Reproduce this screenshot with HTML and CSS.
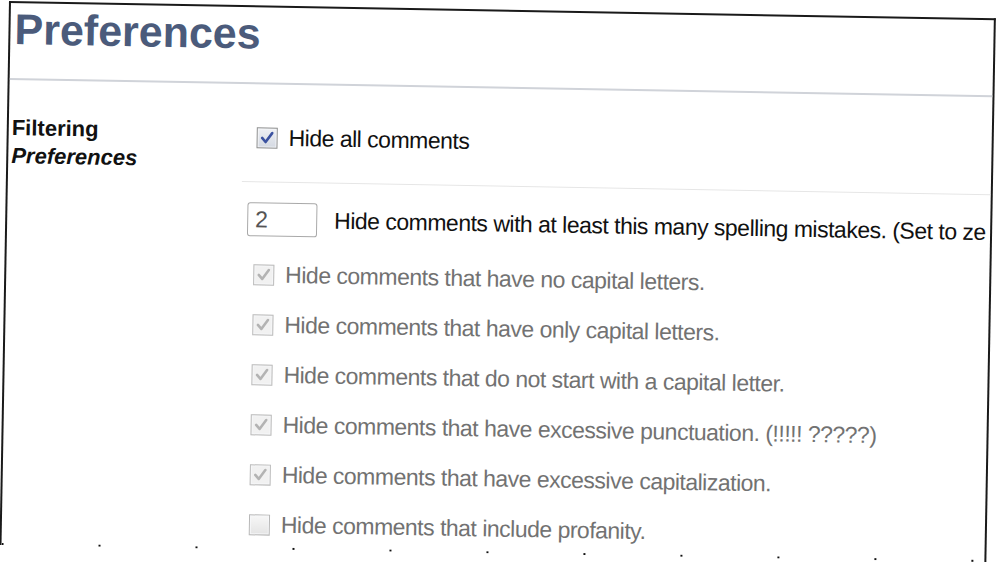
FILE: index.html
```html
<!DOCTYPE html>
<html lang="en">

<head>
  <meta charset="UTF-8">
  <meta name="viewport" content="width=device-width, initial-scale=1.0">
  <link rel="stylesheet" href="styles.css">
  <title>Preferences</title>
</head>

<body>

  <div class="frame">
    <h1 class="title">Preferences</h1>
    <div class="rule"></div>

    <div class="section">
      <div class="label">Filtering<br><em>Preferences</em></div>

      <div class="options">
        <label class="opt main">
          <span class="box on"><svg viewBox="0 0 19 19"><polyline points="4.5,9.5 8,13.5 14.5,4.5" /></svg></span>
          Hide all comments
        </label>

        <div class="sep"></div>

        <div class="opt spell">
          <input type="text" class="num" value="2">
          Hide comments with at least this many spelling mistakes. (Set to ze
        </div>

        <div class="checks">
          <label class="opt off">
            <span class="box dis"><svg viewBox="0 0 19 19"><polyline points="4.5,9.5 8,13.5 14.5,4.5" /></svg></span>
            Hide comments that have no capital letters.
          </label>
          <label class="opt off">
            <span class="box dis"><svg viewBox="0 0 19 19"><polyline points="4.5,9.5 8,13.5 14.5,4.5" /></svg></span>
            Hide comments that have only capital letters.
          </label>
          <label class="opt off">
            <span class="box dis"><svg viewBox="0 0 19 19"><polyline points="4.5,9.5 8,13.5 14.5,4.5" /></svg></span>
            Hide comments that do not start with a capital letter.
          </label>
          <label class="opt off">
            <span class="box dis"><svg viewBox="0 0 19 19"><polyline points="4.5,9.5 8,13.5 14.5,4.5" /></svg></span>
            Hide comments that have excessive punctuation. (!!!!! ?????)
          </label>
          <label class="opt off">
            <span class="box dis"><svg viewBox="0 0 19 19"><polyline points="4.5,9.5 8,13.5 14.5,4.5" /></svg></span>
            Hide comments that have excessive capitalization.
          </label>
          <label class="opt off">
            <span class="box empty"></span>
            Hide comments that include profanity.
          </label>
        </div>
      </div>
    </div>

    <div class="tear"></div>
  </div>

</body>

</html>
```

FILE: styles.css
```css
html {
  height: 100%;
  overflow: hidden;
}

body {
  height: 100%;
  margin: 0;
  background: #fff;
  font-family: "Liberation Sans", Arial, sans-serif;
}

/* the screenshot is tilted a little, like a cropped photo */
.frame {
  display: flex;
  flex-direction: column;
  box-sizing: border-box;
  width: 987px;
  height: 544px;
  margin: 1px 0 0 9px;
  border: 2px solid #1a1a1a;
  border-bottom: none;
  overflow: hidden;
  transform-origin: 0 0;
  transform: rotate(1deg);
}

.title {
  margin: 2px 0 0 4px;
  font-size: 43px;
  line-height: 48px;
  font-weight: bold;
  color: #4b5b7b;
}

.rule {
  height: 2px;
  margin-top: 25px;
  background: #d0d3d9;
}

.section {
  display: flex;
  margin-top: 34px;
}

.label {
  flex: none;
  width: 231px;
  padding-left: 3px;
  font-size: 22px;
  line-height: 28px;
  font-weight: bold;
  color: #111;
}

.options {
  flex: 1;
  min-width: 0;
  display: flex;
  flex-direction: column;
  padding-top: 9px;
  white-space: nowrap;
}

.opt {
  display: flex;
  align-items: center;
  gap: 11px;
  height: 21px;
  font-size: 23px;
  letter-spacing: -0.5px;
  color: #111;
}

.opt.main {
  margin-left: 14px;
}

.sep {
  height: 1px;
  margin-top: 33px;
  background: #e6e6e6;
}

.opt.spell {
  height: 34px;
  margin-top: 20px;
  margin-left: 6px;
  gap: 17px;
}

.num {
  flex: none;
  box-sizing: border-box;
  width: 70px;
  height: 34px;
  padding: 0 7px;
  border: 1px solid #a9a9a9;
  border-radius: 3px;
  font-family: inherit;
  font-size: 23px;
  color: #555;
}

.checks {
  display: flex;
  flex-direction: column;
  gap: 29px;
  margin-top: 28px;
  padding-left: 13px;
}

.opt.off {
  color: #727272;
}

.box {
  flex: none;
  box-sizing: border-box;
  width: 21px;
  height: 21px;
  border: 1px solid #8e8f8f;
  background: linear-gradient(#eef0f4, #d4d9e2);
  box-shadow: inset 0 0 0 1px #f6f7f9;
}

.box svg {
  display: block;
  width: 19px;
  height: 19px;
  fill: none;
  stroke-width: 2.6;
  stroke-linecap: round;
  stroke-linejoin: round;
}

.box.on svg {
  stroke: #3b52a0;
}

.box.dis {
  border-color: #bdbdbd;
  background: #f1f1f1;
}

.box.dis svg {
  stroke: #b3b3b3;
}

.box.empty {
  border-color: #b7b7b7;
  background: linear-gradient(#f7f7f7, #e4e4e4);
}

/* sparse dots where the cropped picture ends */
.tear {
  flex: none;
  height: 2px;
  margin-top: auto;
  background-image: linear-gradient(to right, #111 2px, transparent 2px);
  background-size: 97px 2px;
  background-repeat: repeat-x;
}
```
